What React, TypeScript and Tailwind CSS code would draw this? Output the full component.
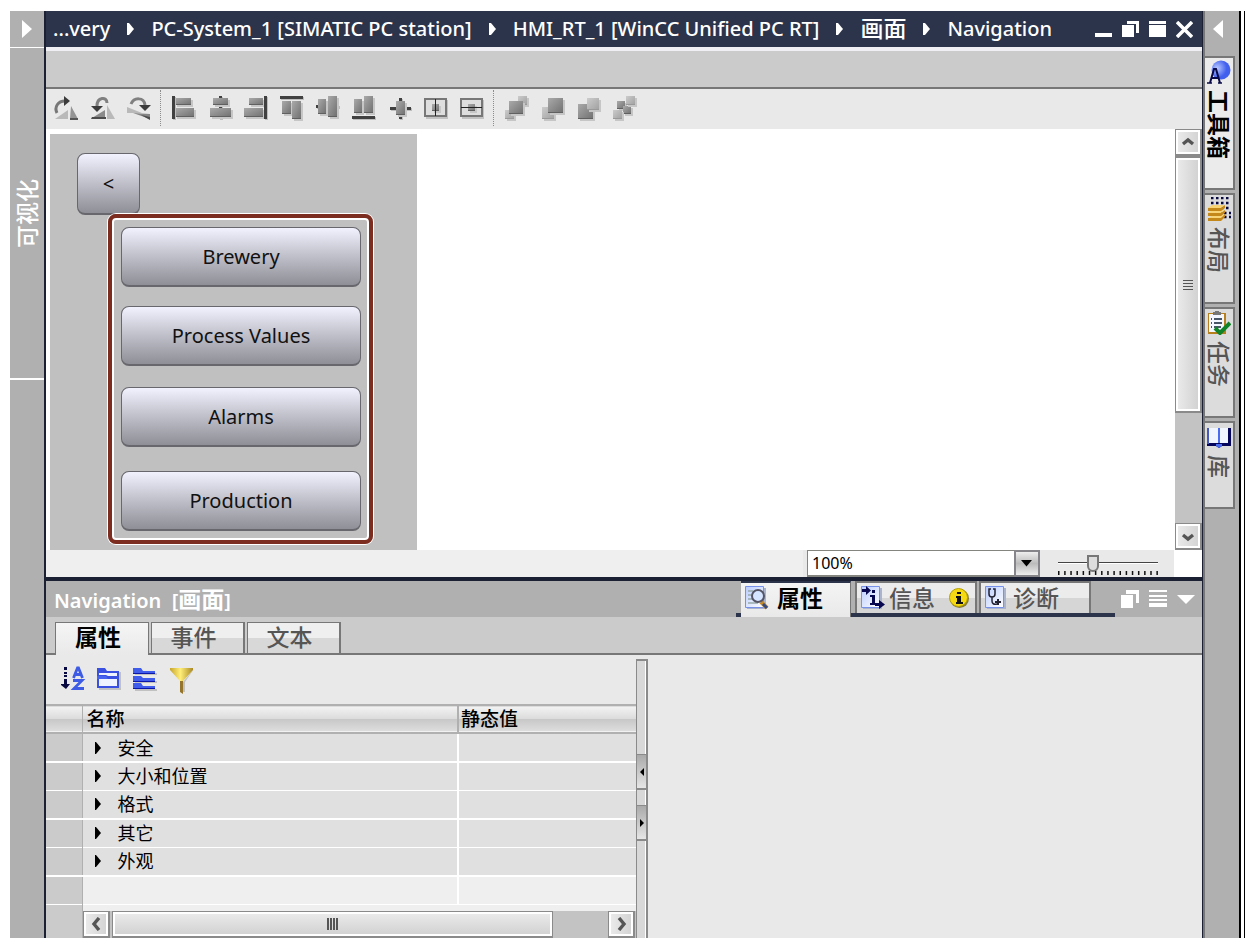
import React from 'react';

type Box = [number, number, number, number];

function Blocks({ items, light = false }: { items: Box[]; light?: boolean }) {
  return (
    <>
      {items.map(([x, y, w, h]) => (
        <g key={`${x}-${y}`}>
          <rect x={x + 2} y={y + 2} width={w} height={h} fill="#c6c6c6" />
          <rect x={x} y={y} width={w} height={h} fill={light ? 'url(#blockLight)' : 'url(#blockDark)'} />
          <rect x={x} y={y + h - 1} width={w} height={1} fill={light ? '#999999' : '#606060'} />
        </g>
      ))}
    </>
  );
}

function Bar({ b }: { b: Box }) {
  return (
    <>
      <rect x={b[0] + 1} y={b[1] + 1} width={b[2]} height={b[3]} fill="#bdbdbd" />
      <rect x={b[0]} y={b[1]} width={b[2]} height={b[3]} fill="#404040" />
    </>
  );
}

const rotateTools = [
  {
    name: '旋转',
    art: (
      <>
        <path d="M1 23 14 14v9Z" fill="#b9b9b9" />
        <path d="M17 10 24 23h-8Z" fill="#949494" />
        <path d="M16 22h8v2h-8z" fill="#555" />
        <path d="M3 17C0 11 4 5 11 5" fill="none" stroke="#777" strokeWidth="3" />
        <path d="m10 0 6 5-6 5Z" fill="#3b3b3b" />
      </>
    ),
  },
  {
    name: '向左旋转',
    art: (
      <>
        <path d="m2 22 13-8v8Z" fill="#8a8a8a" />
        <path d="M2 21h14v2H1z" fill="#4b4b4b" />
        <path d="m17 9 8 14h-8Z" fill="#b9b9b9" />
        <path d="M17 7C17 0 7 1 7 10" fill="none" stroke="#808080" strokeWidth="3" />
        <path d="M1 10h12l-6 6Z" fill="#3b3b3b" />
      </>
    ),
  },
  {
    name: '向右旋转',
    art: (
      <>
        <path d="m1 11 15 6H1Z" fill="#b9b9b9" />
        <path d="m7 17 17 1v5Z" fill="#858585" />
        <path d="m15 19 9 2v3Z" fill="#4b4b4b" />
        <path d="M5 8C8 1 18 1 19 9" fill="none" stroke="#808080" strokeWidth="3" />
        <path d="M13 9h12l-6 6Z" fill="#3b3b3b" />
      </>
    ),
  },
];

const alignTools = [
  { name: '左对齐', art: <><Blocks items={[[4, 2, 16, 7], [4, 12, 19, 9]]} /><Bar b={[1, 0, 3, 23]} /></> },
  { name: '水平居中', art: <><Bar b={[12, 0, 3, 23]} /><Blocks items={[[6, 2, 15, 7], [3, 12, 21, 9]]} /></> },
  { name: '右对齐', art: <><Blocks items={[[6, 2, 14, 7], [1, 12, 19, 9]]} /><Bar b={[21, 0, 3, 23]} /></> },
  { name: '顶端对齐', art: <><Blocks items={[[3, 5, 9, 13], [13, 5, 9, 18]]} /><Bar b={[1, 0, 23, 3]} /></> },
  { name: '垂直居中', art: <><Bar b={[1, 9, 23, 3]} /><Blocks items={[[3, 3, 8, 15], [13, 0, 9, 21]]} /></> },
  { name: '底端对齐', art: <><Blocks items={[[3, 3, 8, 14], [13, 0, 9, 17]]} /><Bar b={[1, 20, 23, 3]} /></> },
  {
    name: '居中',
    art: <><Bar b={[12, 2, 3, 21]} /><Bar b={[3, 11, 21, 3]} /><Blocks items={[[9, 5, 9, 14]]} /></>,
  },
  {
    name: '水平置中',
    art: (
      <>
        <path d="M3 4h22v19H3z" fill="#c2c2c2" />
        <path d="M2 3h21v17H2z" fill="#dedede" stroke="#777" strokeWidth="2" />
        <Blocks items={[[9, 8, 7, 7]]} />
        <path d="M12 3h1v17h-1z" fill="#222" />
      </>
    ),
  },
  {
    name: '垂直置中',
    art: (
      <>
        <path d="M3 4h22v19H3z" fill="#c2c2c2" />
        <path d="M2 3h21v17H2z" fill="#dedede" stroke="#777" strokeWidth="2" />
        <Blocks items={[[9, 8, 7, 7]]} />
        <path d="M2 11h21v1H2z" fill="#222" />
      </>
    ),
  },
];

const orderTools = [
  { name: '移到最前', art: <><Blocks light items={[[14, 0, 9, 9], [1, 14, 9, 9]]} /><Blocks items={[[5, 5, 14, 13]]} /></> },
  { name: '前移', art: <><Blocks light items={[[2, 11, 12, 12]]} /><Blocks items={[[8, 2, 15, 15]]} /></> },
  { name: '后移', art: <><Blocks items={[[2, 8, 15, 15]]} /><Blocks light items={[[11, 2, 12, 12]]} /></> },
  { name: '移到最后', art: <><Blocks items={[[5, 5, 8, 8], [11, 10, 8, 8]]} /><Blocks light items={[[14, 0, 9, 9], [1, 14, 9, 9]]} /></> },
];

function ToolGroup({ tools }: { tools: { name: string; art: React.ReactNode }[] }) {
  return (
    <div className="flex gap-3">
      {tools.map((t) => (
        <button key={t.name} aria-label={t.name} className="block size-6">
          <svg viewBox="0 0 24 24" className="size-6 overflow-visible">{t.art}</svg>
        </button>
      ))}
    </div>
  );
}

function Dots() {
  return <span className="h-9 w-px border-l border-dotted border-[#8c8c8c]" />;
}

function Crumb({ children }: { children: React.ReactNode }) {
  return <a href="#" className="whitespace-nowrap">{children}</a>;
}

function CrumbArrow() {
  return (
    <svg viewBox="0 0 7 12" className="h-3 w-[7px] shrink-0" fill="#fff">
      <path d="M0 0h2l5 6-5 6H0Z" />
    </svg>
  );
}

const screenButtons = [
  { label: 'Brewery', top: 'top-[93px]' },
  { label: 'Process Values', top: 'top-[172px]' },
  { label: 'Alarms', top: 'top-[253px]' },
  { label: 'Production', top: 'top-[337px]' },
];

const screenButton =
  'absolute rounded-lg border border-b-2 border-[#67676d] bg-linear-to-b from-[#f2f2ff] to-[#8f8f97] text-xl text-[#111]';

function ScrollButton({ label, d }: { label: string; d: string }) {
  return (
    <button
      aria-label={label}
      className="flex size-[27px] shrink-0 items-center justify-center border border-r-2 border-b-2 border-[#8a8a8a] bg-linear-to-r from-[#ececec] to-[#d2d2d2] shadow-[inset_0_0_0_2px_#fff]"
    >
      <svg viewBox="0 0 14 14" className="size-3.5" fill="none" stroke="#555" strokeWidth="3.4">
        <path d={d} />
      </svg>
    </button>
  );
}

function Workspace() {
  return (
    <div className="flex h-[421px] bg-white">
      <div className="min-w-0 flex-1 pt-[5px] pl-1">
        <div className="relative h-[416px] w-[367px] bg-[#c0c0c0]">
          <button className={`${screenButton} top-[19px] left-[27px] h-[62px] w-[63px]`}>&lt;</button>
          {screenButtons.map((b) => (
            <button key={b.label} className={`${screenButton} ${b.top} left-[71px] h-[60px] w-60`}>
              {b.label}
            </button>
          ))}
          <div className="pointer-events-none absolute top-[80px] left-[58px] h-[330px] w-[265px] rounded-lg border-4 border-[#7d2c20] shadow-[inset_0_0_0_2px_#fff,0_0_0_1px_#fff]" />
        </div>
      </div>
      <div className="flex w-[27px] flex-col bg-[#c3c3c3]">
        <ScrollButton label="向上滚动" d="M2 9l5-4 5 4" />
        <div className="flex h-[257px] items-center justify-center border-2 border-l border-[#8a8a8a] bg-linear-to-r from-[#ececec] to-[#d0d0d0] shadow-[inset_0_0_0_2px_#fff]">
          <span className="h-2.5 w-2.5 bg-[repeating-linear-gradient(#555_0_1px,transparent_1px_3px)]" />
        </div>
        <div className="flex-1" />
        <ScrollButton label="向下滚动" d="M2 6l5 4 5-4" />
      </div>
    </div>
  );
}

function ZoomBar() {
  return (
    <div className="flex h-[27px] justify-end bg-[#efefef]">
      <div className="flex bg-[#e9e9e9] pl-1">
        <div className="relative w-[233px]">
          <select
            aria-label="缩放"
            className="block h-[27px] w-full appearance-none border-2 border-t border-l border-[#85857f] bg-white pl-1 text-base leading-5 text-black"
          >
            <option>100%</option>
          </select>
          <span className="pointer-events-none absolute top-0 right-0 flex h-[27px] w-[26px] items-center justify-center border-2 border-[#85858a] bg-linear-to-b from-[#eee] via-[#bbb] to-[#eee]">
            <svg viewBox="0 0 12 7" className="h-[7px] w-3"><path d="M0 0h11L5.500 6.500Z" /></svg>
          </span>
        </div>
        <div className="relative ml-[18px] w-[100px]">
          <input
            type="range"
            aria-label="缩放比例"
            defaultValue={33}
            className="block h-[25px] w-full appearance-none bg-transparent [&::-webkit-slider-runnable-track]:h-[2px] [&::-webkit-slider-runnable-track]:border-t [&::-webkit-slider-runnable-track]:border-[#444] [&::-webkit-slider-runnable-track]:bg-white [&::-webkit-slider-thumb]:-mt-2 [&::-webkit-slider-thumb]:h-[17px] [&::-webkit-slider-thumb]:w-3 [&::-webkit-slider-thumb]:appearance-none [&::-webkit-slider-thumb]:rounded-b-full [&::-webkit-slider-thumb]:border-2 [&::-webkit-slider-thumb]:border-[#777] [&::-webkit-slider-thumb]:bg-[#ddd]"
          />
          <svg viewBox="0 0 100 4" className="absolute top-[21px] left-0 h-1 w-full">
            <path d="M0 2h100" stroke="#111" strokeWidth="4" strokeDasharray="1.500 4.650" />
          </svg>
        </div>
        <div className="ml-4 w-[28px] bg-white" />
      </div>
    </div>
  );
}

function InspectorTab({ active = false, label, icon, children }: { active?: boolean; label: string; icon: React.ReactNode; children?: React.ReactNode }) {
  return (
    <button
      className={
        active
          ? 'flex h-9 w-[110px] items-center border-t-2 border-r border-t-[#2c344b] border-r-[#777] bg-linear-to-b from-[#f4f4f4] to-[#e9e9e9] pb-1 pl-1 text-black'
          : 'flex h-8 items-center border-2 border-b-0 border-[#777] bg-linear-to-b from-[#ececec] from-50% to-[#d6d6d6] to-50% pl-1 text-[#555]'
      }
    >
      {icon}
      <span className={active ? 'ml-2 font-bold' : 'ml-1 font-medium'}>{label}</span>
      {children}
    </button>
  );
}

function Page() {
  return (
    <>
      <path d="M2 2h19v21H2z" fill="#aab4cc" />
      <path d="M.5.5h18v21H.5z" fill="url(#paper)" stroke="#7790e8" />
    </>
  );
}

function InspectorHeader() {
  return (
    <div className="flex h-9 justify-between bg-[#b0b0b0]">
      <h2 className="pl-2 text-xl leading-9 font-semibold text-white">
        Navigation&nbsp; [<span className="text-[23px]">画面</span>]
      </h2>
      <div className="flex pr-[7px] text-[23px] leading-7">
        <span className="mt-8 h-1 w-[5px] bg-[#2c344b]" />
        <InspectorTab
          active
          label="属性"
          icon={
            <svg viewBox="0 0 24 24" className="size-6 shrink-0">
              <Page />
              <path d="M3 5h5M3 9h5M3 13h5M3 17h10" stroke="#9aa" strokeWidth="1.500" />
              <path d="m16 16 6 6" stroke="#c98a28" strokeWidth="4" />
              <path d="m18 18 4 4" stroke="#334b80" strokeWidth="3" />
              <circle cx="13" cy="10" r="6" fill="#d5e5ff" stroke="#556" strokeWidth="2" />
            </svg>
          }
        />
        <div className="flex gap-0.5 border-b-4 border-[#2c344b] pr-6 pl-1">
          <InspectorTab
            label="信息"
            icon={
              <svg viewBox="0 0 24 24" className="size-6 shrink-0">
                <Page />
                <path d="M1 3h4V0l5 4.500L5 9V6H1zM14 17h4v-3l6 4.500-6 4.500v-3h-4z" fill="#080850" />
                <path d="M11 4h3v3h-3zM9 9h5v8h2v2H9v-2h2v-6H9z" fill="#080850" />
              </svg>
            }
          >
            <svg viewBox="0 0 20 20" className="mr-1.5 ml-3.5 size-5">
              <circle cx="10.500" cy="10.500" r="9.500" fill="#867c35" />
              <circle cx="9.500" cy="9.500" r="9" fill="#f4d913" stroke="#b6a000" />
              <path d="M8 4h4v2H8zM7 8h5v6h2v2H7v-2h1v-4H7z" fill="#111" />
            </svg>
          </InspectorTab>
          <InspectorTab
            label="诊断"
            icon={
              <svg viewBox="0 0 24 24" className="size-6 shrink-0">
                <Page />
                <path d="M6 3H4v5q0 3 3 3t3-3V3H8M7 11v4q0 4 5 3" fill="none" stroke="#223" strokeWidth="1.500" />
                <path d="M10 16h6M13 13v6" stroke="#223" strokeWidth="2" />
              </svg>
            }
          >
            <span className="w-[30px]" />
          </InspectorTab>
        </div>
        <div className="flex items-center gap-2.5 pl-1.5">
          <button aria-label="浮动">
            <svg viewBox="0 0 18 18" className="size-[18px]" fill="#fff"><path d="M5 0h13v13h-3V4H5zM0 5h12v13H0z" /></svg>
          </button>
          <button aria-label="列表">
            <svg viewBox="0 0 18 18" className="size-[18px]" fill="#fff"><path d="M0 0h18v2H0zM0 5h18v2H0zM0 9h18v2H0zM0 13h18v4H0z" /></svg>
          </button>
          <button aria-label="折叠">
            <svg viewBox="0 0 18 18" className="size-[18px]" fill="#fff"><path d="M0 5h18l-9 9Z" /></svg>
          </button>
        </div>
      </div>
    </div>
  );
}

function SubTabs() {
  return (
    <div className="flex h-[38px] items-end gap-0.5 border-b-2 border-[#777] bg-[#cbcbcb] pl-[9px] text-[23px] leading-7">
      <button className="-mb-0.5 h-[33px] w-[94px] border border-b-0 border-[#777] bg-linear-to-b from-[#f5f5f5] to-[#e9e9e9] pr-2 pb-1 font-bold text-black">属性</button>
      {['事件', '文本'].map((t) => (
        <button key={t} className="h-[31px] w-[94px] border border-r-2 border-b-0 border-[#777] bg-linear-to-b from-[#efefef] from-50% to-[#d8d8d8] to-50% pr-2 pb-1 font-medium text-[#555]">
          {t}
        </button>
      ))}
    </div>
  );
}

const propertyTools = [
  {
    name: '按字母排序',
    art: (
      <>
        <path d="M4 0h3v3H4zM4 5h3v2H4zM4 8h3v2H4zM4 12h3v5h3l-4 5-5-4v-1h3z" fill="#080840" />
        <path d="m13.500 11 4-10h1l4 10M15 7.500h6M13 13.500h9l-8 8h10" fill="none" stroke="#3d5be5" strokeWidth="2.800" />
      </>
    ),
  },
  {
    name: '按类别排序',
    art: (
      <>
        <path d="M3 5h22v18H3z" fill="#c1c1c1" />
        <path d="M1 1h8l2 3h12v17H1z" fill="#3950e0" />
        <path d="M3 6h18v3H12l-2-1H3zM3 12h18v7H3z" fill="#eef3ff" />
        <path d="M1 9h9l2 3H1z" fill="#4664f0" />
      </>
    ),
  },
  {
    name: '全部展开',
    art: (
      <>
        <path d="M3 6h22v2H3zM3 14h22v2H3zM3 22h22v2H3z" fill="#c1c1c1" />
        <path d="M1 1h8l2 3h12v3H1zM1 9h8l2 2h12v4H1zM1 16h8l2 3h12v3H1z" fill="#405ceb" />
        <path d="M1 6h22v1H1zM1 14h22v1H1zM1 21h22v1H1z" fill="#0c18aa" />
      </>
    ),
  },
  {
    name: '筛选',
    art: (
      <>
        <path d="m15 15 11-13-9 13v10h-2z" fill="#c1c1c1" />
        <path d="M2 1h23v2L15 14v12l-3-1V14L2 3Z" fill="url(#gold)" />
        <path d="M12 14h3v13l-3-2z" fill="#94752b" />
      </>
    ),
  },
];

const categories = ['安全', '大小和位置', '格式', '其它', '外观'];

function PropertyTable() {
  return (
    <table className="w-full table-fixed border-collapse text-left text-black">
      <colgroup>
        <col className="w-9" />
        <col />
        <col className="w-[178px]" />
      </colgroup>
      <thead>
        <tr className="h-7 border-y-2 border-[#b0b0b0] bg-[linear-gradient(#f2f2f2,#dcdcdc_48%,#c8c8c8_52%,#ddd)] text-[19px] leading-6">
          <th aria-label="选择" className="border-r border-[#b0b0b0] p-0" />
          <th className="border-r-2 border-[#b0b0b0] py-0 pr-0 pl-1 font-medium">名称</th>
          <th className="py-0 pr-0 pl-0.5 font-medium">静态值</th>
        </tr>
      </thead>
      <tbody className="text-lg leading-6">
        {[...categories, ''].map((name, i) => (
          <tr key={i} className={`${i % 2 ? 'h-7 border-b' : 'h-[29px] border-b-2'} border-white ${name ? 'bg-[#e0e0e0]' : 'bg-[#efefef]'}`}>
            <td className="border-r border-r-[#b0b0b0] bg-[#cbcbcb] p-0" />
            <td className="border-r-2 border-r-white p-0">
              {name && (
                <button className="flex w-full items-center pl-3">
                  <svg viewBox="0 0 6 12" className="mr-[17px] h-3 w-1.5"><path d="M0 0h1l5 6-5 6H0Z" /></svg>
                  {name}
                </button>
              )}
            </td>
            <td className="border-l border-l-[#cbcbcb] p-0" />
          </tr>
        ))}
      </tbody>
    </table>
  );
}

function Splitter() {
  const arrow = 'flex h-9 w-full items-center justify-center border-t border-b-2 border-[#8a8a8a] bg-linear-to-b from-[#aaa] to-[#e6e6e6]';
  return (
    <div className="mt-1 flex w-3 flex-col border-t-2 border-r-2 border-l border-[#8a8a8a] bg-[#d8d8d8] pt-[93px] shadow-[inset_-1px_0_0_#fff]">
      <button aria-label="向左" className={arrow}><svg viewBox="0 0 4 8" className="h-2 w-1"><path d="M4 0v8L0 4Z" /></svg></button>
      <button aria-label="向右" className={`${arrow} mt-[15px]`}><svg viewBox="0 0 4 8" className="h-2 w-1"><path d="M0 0v8l4-4Z" /></svg></button>
    </div>
  );
}

function Inspector() {
  return (
    <div className="flex flex-1 bg-[#e9e9e9]">
      <div className="flex w-[590px] flex-col">
        <div className="flex h-[49px] gap-3 pt-3 pl-[14px]">
          {propertyTools.map((t) => (
            <button key={t.name} aria-label={t.name} className="size-6">
              <svg viewBox="0 0 24 24" className="size-6 overflow-visible">{t.art}</svg>
            </button>
          ))}
        </div>
        <PropertyTable />
        <div className="flex flex-1">
          <div className="w-[37px] border-r border-[#b0b0b0] bg-[#cbcbcb]" />
          <div className="flex flex-1 items-end bg-[#efefef]">
            <div className="flex flex-1 bg-[#c3c3c3] pr-px">
              <ScrollButton label="向左滚动" d="M10 1L5 7l5 6" />
              <div className="ml-0.5 flex h-[27px] w-[441px] items-center justify-center border border-b-2 border-[#8a8a8a] bg-linear-to-b from-[#ececec] to-[#d0d0d0] shadow-[inset_0_0_0_2px_#fff]">
                <span className="h-3 w-[11px] bg-[repeating-linear-gradient(90deg,#555_0_2px,transparent_2px_3px)]" />
              </div>
              <div className="flex-1" />
              <ScrollButton label="向右滚动" d="M5 1l5 6-5 6" />
            </div>
          </div>
        </div>
      </div>
      <Splitter />
    </div>
  );
}

const sideTabs = [
  {
    label: '工具箱',
    box: 'h-[134px] bg-[#ebebeb] font-bold text-black',
    art: (
      <>
        <circle cx="14" cy="10" r="9.500" fill="url(#ball)" />
        <path d="m3 23 4-14h2l4 14M5 18h7" fill="none" stroke="#0a0a48" strokeWidth="2" />
        <path d="M0 23h5M11 23h4" stroke="#0a0a48" strokeWidth="1.500" />
      </>
    ),
  },
  {
    label: '布局',
    box: 'h-[111px] bg-[#dcdcdc] font-medium text-[#555]',
    art: (
      <>
        <path d="M4 1h20M4 6h20M4 11h20M12 16h12M12 20h12" stroke="#080840" strokeWidth="2.500" strokeDasharray="2.500 2.500" />
        <path d="m1 11 4-3h12l-3 3zM1 16l4-3h12l-3 3zM1 22l4-4h12l-3 4z" fill="#f9d477" />
        <path d="M1 11h13l4-3v3l-4 3H1zM1 16h13l4-3v3l-4 3H1zM1 21h13l4-4v3l-4 4H1z" fill="#c38819" />
        <path d="m1 11 4-3h12l-3 3zM1 16l4-2h10l-2 2z" fill="#f9d477" />
      </>
    ),
  },
  {
    label: '任务',
    box: 'h-[111px] bg-[#dcdcdc] font-medium text-[#555]',
    art: (
      <>
        <path d="M1 2h18v21H1z" fill="#b8801d" />
        <path d="M2 3h15v18H2z" fill="#f4f7ff" />
        <path d="M6 4V1h2V0h4v1h2v3z" fill="#777" />
        <path d="M4 8h1m2 0h8M4 12h1m2 0h8M4 16h1m2 0h7" stroke="#123" strokeWidth="1.500" />
        <path d="m8 17 5 5L23 12" fill="none" stroke="#118329" strokeWidth="4" />
      </>
    ),
  },
  {
    label: '库',
    box: 'h-[88px] bg-[#dcdcdc] font-medium text-[#555]',
    art: (
      <>
        <path d="M0 3h24v18h-9l-3 2-3-2H0z" fill="#06065c" />
        <path d="M2 3h9v15H2zM13 3h8v15h-8z" fill="#f1f5ff" />
        <path d="M11 3h2v15h-2zM9 19h6v2l-3 2-3-2z" fill="#4b6cf0" />
        <path d="M0 3h2v16H0z" fill="#4659c0" />
      </>
    ),
  },
];

function SideBar() {
  return (
    <aside className="flex w-9 flex-col gap-[3px] border-l-2 border-[#777] bg-[#b0b0b0]">
      <button aria-label="折叠任务卡" className="flex h-[42px] pt-[9px] pl-2">
        <svg viewBox="0 0 10 18" className="h-[18px] w-2.5" fill="#fff"><path d="M10 0v18L0 9Z" /></svg>
      </button>
      {sideTabs.map((t) => (
        <button key={t.label} className={`flex w-[30px] flex-col items-center border-y-2 border-r-2 border-[#777] pt-0.5 text-[23px] leading-7 ${t.box}`}>
          <svg viewBox="0 0 24 24" className="size-6 shrink-0">{t.art}</svg>
          <span className="mt-1.5 [text-orientation:sideways] [writing-mode:vertical-rl]">{t.label}</span>
        </button>
      ))}
    </aside>
  );
}

function TitleBar() {
  return (
    <header className="flex h-9 items-center justify-between bg-[#2c344b] pr-[9px] pl-[7px] text-white">
      <nav aria-label="路径" className="flex items-center gap-[17px] text-xl leading-9 font-medium">
        <Crumb>...very</Crumb>
        <CrumbArrow />
        <Crumb>PC-System_1 [SIMATIC PC station]</Crumb>
        <CrumbArrow />
        <Crumb>HMI_RT_1 [WinCC Unified PC RT]</Crumb>
        <CrumbArrow />
        <Crumb><span className="text-[23px]">画面</span></Crumb>
        <CrumbArrow />
        <Crumb>Navigation</Crumb>
      </nav>
      <div className="flex gap-2.5">
        <button aria-label="最小化"><svg viewBox="0 0 17 17" className="size-[17px]" fill="#fff"><path d="M0 12h17v4H0z" /></svg></button>
        <button aria-label="还原"><svg viewBox="0 0 17 17" className="size-[17px]" fill="#fff"><path d="M5 0h12v12h-3V3H5zM0 4h12v12H0z" /></svg></button>
        <button aria-label="最大化"><svg viewBox="0 0 17 17" className="size-[17px]" fill="#fff"><path d="M0 0h17v3H0zM0 4h17v12H0z" /></svg></button>
        <button aria-label="关闭"><svg viewBox="0 0 17 17" className="size-[17px]" fill="none" stroke="#fff" strokeWidth="3.500"><path d="m1 1 15 15M16 1 1 16" /></svg></button>
      </div>
    </header>
  );
}

function Gradients() {
  return (
    <svg className="absolute size-0" aria-hidden="true">
      <defs>
        <linearGradient id="blockDark" x2="1" y2="1"><stop stopColor="#aaa" /><stop offset="1" stopColor="#707070" /></linearGradient>
        <linearGradient id="blockLight" x2="1" y2="1"><stop stopColor="#ccc" /><stop offset="1" stopColor="#a0a0a0" /></linearGradient>
        <linearGradient id="paper" x2="1" y2="1"><stop stopColor="#b9ccff" /><stop offset="1" stopColor="#fff" /></linearGradient>
        <linearGradient id="gold"><stop stopColor="#c7a52c" /><stop offset=".45" stopColor="#ffef78" /><stop offset="1" stopColor="#a98824" /></linearGradient>
        <radialGradient id="ball" cx=".3" cy=".4"><stop stopColor="#b7c8ff" /><stop offset="1" stopColor="#4260ee" /></radialGradient>
      </defs>
    </svg>
  );
}

export default function App() {
  return (
    <div className="flex min-h-screen bg-white pt-[11px] pr-2.5 pb-2.5 pl-2.5 font-['Noto_Sans','Noto_Sans_CJK_SC',sans-serif]">
      <Gradients />
      <aside className="flex w-[34px] shrink-0 flex-col bg-[#b0b0b0]">
        <button aria-label="展开项目树" className="flex h-[37px] items-center justify-center border-b border-white">
          <svg viewBox="0 0 10 18" className="h-[18px] w-2.5" fill="#fff"><path d="M0 0v18l10-9Z" /></svg>
        </button>
        <div className="flex h-[332px] items-center justify-center border-b-2 border-white text-[23px] font-medium text-white">
          <span className="rotate-180 [text-orientation:sideways] [writing-mode:vertical-rl]">可视化</span>
        </div>
      </aside>
      <main className="flex min-w-0 flex-1 flex-col border-r border-l-2 border-[#1b2133]">
        <TitleBar />
        <div className="h-[42px] border-t-4 border-b-2 border-t-[#f0f0f4] border-b-[#777] bg-[#cbcbcb]" />
        <div className="flex h-10 items-center gap-2.5 bg-[#e9e9e9] pb-0.5 pl-2">
          <ToolGroup tools={rotateTools} />
          <Dots />
          <ToolGroup tools={alignTools} />
          <Dots />
          <ToolGroup tools={orderTools} />
        </div>
        <Workspace />
        <ZoomBar />
        <div className="h-1 bg-[#1b2133]" />
        <InspectorHeader />
        <SubTabs />
        <Inspector />
      </main>
      <SideBar />
      <div className="flex w-1.5 shrink-0 border-r border-l-2 border-black" />
    </div>
  );
}
